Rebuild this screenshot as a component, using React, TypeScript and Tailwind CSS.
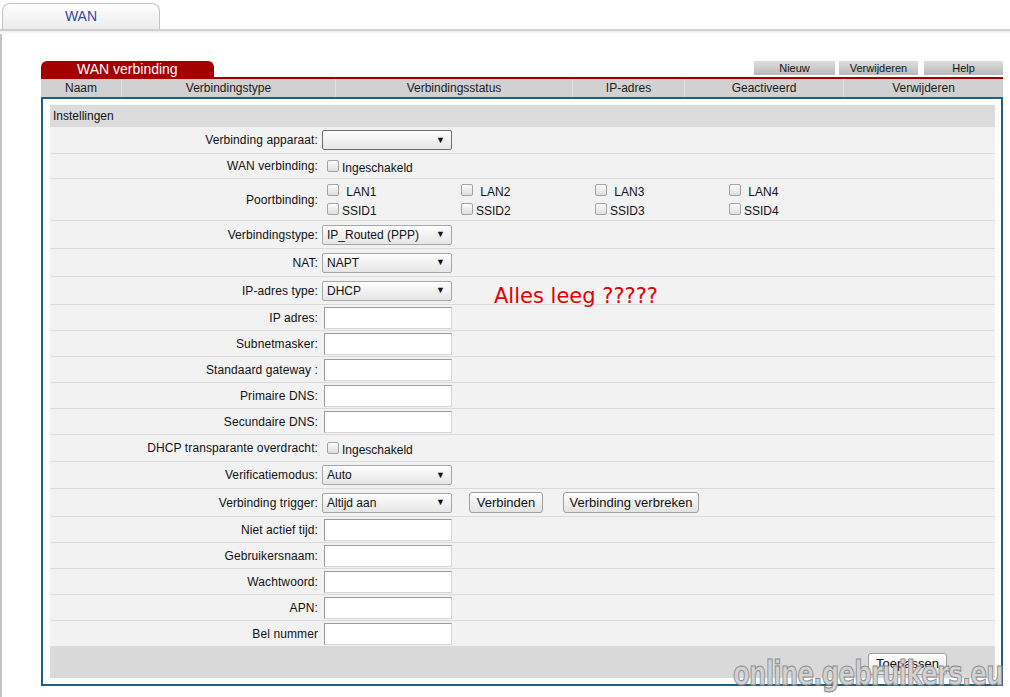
import React from "react";

const Select = ({ value, w = "w-[130px]", dark = false }: { value: string; w?: string; dark?: boolean }) => (
  <div
    className={`${w} h-[20px] flex items-center justify-between pl-[4px] pr-[6px] rounded-[2px] border ${dark ? "border-[#707070]" : "border-[#a6a6a6]"} bg-gradient-to-b from-[#fdfdfd] to-[#e6e6e6] text-[12px] text-[#111]`}
  >
    <span>{value}</span>
    <span className="text-[9px] leading-none">▼</span>
  </div>
);

const Input = () => (
  <div className="ml-[2px] w-[128px] h-[22px] bg-white border border-[#d4d4d4] border-t-[#9a9a9a] border-l-[#9a9a9a]" />
);

const Check = () => (
  <span className="inline-block w-[12px] h-[12px] rounded-[2px] border border-[#a3a3a3] bg-gradient-to-b from-[#fbfbfb] to-[#dedede]" />
);

const Btn = ({ children, w }: { children: React.ReactNode; w: string }) => (
  <div
    className={`${w} h-[21px] flex items-center justify-center rounded-[3px] border border-[#a0a0a0] bg-gradient-to-b from-[#ffffff] to-[#e2e2e2] text-[13px] text-[#111]`}
  >
    {children}
  </div>
);

const Row = ({ label, h, children }: { label: string; h: string; children?: React.ReactNode }) => (
  <div className={`${h} flex items-center border-t border-[#dadada] bg-[#f2f2f2]`}>
    <div className="w-[268px] text-right text-[12px] text-[#111] tracking-[0.1px]">{label}</div>
    <div className="ml-[4px] flex items-center">{children}</div>
  </div>
);

const CheckLabel = ({ text }: { text: string }) => (
  <div className="flex items-center ml-[5px]">
    <Check />
    <span className="ml-[3px] mt-[3px] text-[12px] text-[#111]">{text}</span>
  </div>
);

export default function App() {
  const cols: [string, string][] = [
    ["Naam", "w-[80px]"],
    ["Verbindingstype", "w-[214px]"],
    ["Verbindingsstatus", "w-[237px]"],
    ["IP-adres", "w-[112px]"],
    ["Geactiveerd", "w-[159px]"],
    ["Verwijderen", "w-[160px]"],
  ];
  const ports = [
    ["LAN1", "SSID1"],
    ["LAN2", "SSID2"],
    ["LAN3", "SSID3"],
    ["LAN4", "SSID4"],
  ];
  return (
    <div className="relative w-[1010px] h-[697px] overflow-hidden bg-white font-['Liberation_Sans',Arial,sans-serif]">
      {/* top tab bar */}
      <div className="h-[29px] flex items-end">
        <div className="ml-[2px] w-[158px] h-[26px] rounded-t-[8px] border border-b-0 border-[#c4c4c4] bg-gradient-to-b from-[#ffffff] to-[#ececec] flex items-center justify-center text-[14px] text-[#3446a6]">
          WAN
        </div>
      </div>
      <div className="h-[2px] bg-[#cfcfcf]" />
      <div className="h-[3px] bg-gradient-to-b from-[#ececec] to-white" />

      {/* main area with left border */}
      <div className="border-l-2 border-[#c2c2c2] h-[663px] pt-[27px]">
        <div className="ml-[39px] w-[962px]">
          {/* tabs + buttons */}
          <div className="flex items-end justify-between">
            <div className="w-[173px] h-[16px] rounded-t-[6px] bg-[#a30000] text-white text-[14px] leading-[16px] pl-[36px]">
              WAN verbinding
            </div>
            <div className="flex mb-[2px]">
              <div className="w-[81px] h-[14px] flex items-center justify-center bg-gradient-to-b from-[#dedede] to-[#b9b9b9] text-[11px] text-[#111]">Nieuw</div>
              <div className="ml-[4px] w-[79px] h-[14px] flex items-center justify-center bg-gradient-to-b from-[#dedede] to-[#b9b9b9] text-[11px] text-[#111]">Verwijderen</div>
              <div className="ml-[6px] w-[79px] h-[14px] flex items-center justify-center bg-gradient-to-b from-[#dedede] to-[#b9b9b9] text-[11px] text-[#111]">Help</div>
            </div>
          </div>
          <div className="h-[2px] bg-[#a00000]" />
          <div className="flex h-[18px] bg-[#d1d1d1]">
            {cols.map(([t, w], i) => (
              <div
                key={t}
                className={`${w} flex items-center justify-center text-[12px] text-[#1a1a1a] ${i > 0 ? "border-l border-[#e2e2e2]" : ""}`}
              >
                {t}
              </div>
            ))}
          </div>

          {/* blue box */}
          <div className="h-[589px] border-2 border-[#1c5f8a] pt-[6px] pl-[7px] pr-[6px]">
            <div className="h-[21px] bg-[#dcdcdc] text-[12px] text-[#111] pl-[3px] flex items-center">Instellingen</div>
            <Row label="Verbinding apparaat:" h="h-[27px]">
              <Select value="" dark />
            </Row>
            <Row label="WAN verbinding:" h="h-[25px]">
              <CheckLabel text="Ingeschakeld" />
            </Row>
            <Row label="Poortbinding:" h="h-[42px]">
              <div className="flex ml-[5px]">
                {ports.map(([a, b]) => (
                  <div key={a} className="w-[134px] flex flex-col">
                    <div className="h-[19px] flex items-center">
                      <Check />
                      <span className="ml-[4px] mt-[3px] text-[12px] text-[#111]">&nbsp;{a}</span>
                    </div>
                    <div className="h-[19px] flex items-center">
                      <Check />
                      <span className="ml-[3px] mt-[3px] text-[12px] text-[#111]">{b}</span>
                    </div>
                  </div>
                ))}
              </div>
            </Row>
            <Row label="Verbindingstype:" h="h-[28px]">
              <Select value="IP_Routed (PPP)" />
            </Row>
            <Row label="NAT:" h="h-[28px]">
              <Select value="NAPT" />
            </Row>
            <Row label="IP-adres type:" h="h-[28px]">
              <Select value="DHCP" />
            </Row>
            <Row label="IP adres:" h="h-[26px]">
              <Input />
            </Row>
            <Row label="Subnetmasker:" h="h-[26px]">
              <Input />
            </Row>
            <Row label="Standaard gateway :" h="h-[26px]">
              <Input />
            </Row>
            <Row label="Primaire DNS:" h="h-[26px]">
              <Input />
            </Row>
            <Row label="Secundaire DNS:" h="h-[26px]">
              <Input />
            </Row>
            <Row label="DHCP transparante overdracht:" h="h-[27px]">
              <CheckLabel text="Ingeschakeld" />
            </Row>
            <Row label="Verificatiemodus:" h="h-[27px]">
              <Select value="Auto" />
            </Row>
            <Row label="Verbinding trigger:" h="h-[28px]">
              <Select value="Altijd aan" />
              <div className="ml-[17px]">
                <Btn w="w-[74px]">Verbinden</Btn>
              </div>
              <div className="ml-[20px]">
                <Btn w="w-[136px]">Verbinding verbreken</Btn>
              </div>
            </Row>
            <Row label="Niet actief tijd:" h="h-[26px]">
              <Input />
            </Row>
            <Row label="Gebruikersnaam:" h="h-[26px]">
              <Input />
            </Row>
            <Row label="Wachtwoord:" h="h-[26px]">
              <Input />
            </Row>
            <Row label="APN:" h="h-[26px]">
              <Input />
            </Row>
            <Row label="Bel nummer" h="h-[26px]">
              <Input />
            </Row>
            <div className="h-[32px] bg-[#d9d9d9] flex justify-end items-start pt-[7px] pr-[48px]">
              <div className="w-[79px] h-[22px] flex items-center justify-center rounded-[3px] border border-[#9c9c9c] bg-gradient-to-b from-white to-[#e4e4e4] text-[13px] text-[#111]">
                Toepassen
              </div>
            </div>
          </div>
        </div>
      </div>

      {/* annotation overlay */}
      <div className="absolute left-[494px] top-[286px] text-[21px] text-[#e20000] font-['DejaVu_Sans',sans-serif] leading-none">
        Alles leeg ?????
      </div>

      {/* watermark overlay */}
      <div className="absolute left-[733px] top-[656px] text-[34px] font-bold leading-none tracking-[-1px] text-[#d2d2d2] font-['DejaVu_Sans_Condensed','DejaVu_Sans',sans-serif] [-webkit-text-stroke:1px_#8a8a8a] origin-left scale-x-[0.8]">
        online.gebruikers.eu
      </div>
    </div>
  );
}
